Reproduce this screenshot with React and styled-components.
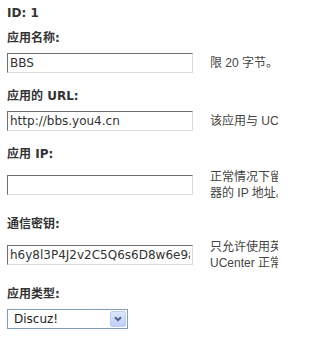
import React from "react";
import styled, { createGlobalStyle } from "styled-components";

const GlobalStyle = createGlobalStyle`
  html, body {
    margin: 0;
    padding: 0;
    background: #fff;
    overflow: hidden;
  }
`;

const Page = styled.div`
  box-sizing: border-box;
  width: 278px;
  overflow: hidden;
  padding: 0 0 0 7px;
  font-family: "Liberation Sans", "Noto Sans CJK SC", sans-serif;
  font-size: 12px;
  color: #333;
`;

const Label = styled.div`
  padding: 6px 0 4px;
  line-height: 15px;
  font-family: "DejaVu Sans", "Noto Sans CJK SC", sans-serif;
  font-size: 12px;
  font-weight: bold;
  color: #333;
  white-space: nowrap;
`;

const Row = styled.div`
  display: flex;
  align-items: center;
  gap: 17px;
  padding: 3px 0 10px;
`;

const TextInput = styled.input`
  flex: none;
  box-sizing: border-box;
  width: 186px;
  height: 20px;
  margin: 0;
  padding: 0 2px;
  border: 1px solid;
  border-color: #6f6f6f #dcdcdc #dcdcdc #6f6f6f;
  font-family: "DejaVu Sans", sans-serif;
  font-size: 12px;
  color: #333;
  background: #fff;
  outline: none;
`;

const Note = styled.div`
  flex: 1;
  min-width: 0;
  overflow: hidden;
  line-height: 16px;
  white-space: nowrap;
  color: #444;
`;

const SelectBox = styled.div`
  box-sizing: border-box;
  display: flex;
  align-items: center;
  width: 121px;
  height: 20px;
  padding: 1px 1px 1px 6px;
  border: 1px solid #7f9db9;
  font-family: "DejaVu Sans", sans-serif;
  font-size: 12px;
  color: #222;
`;

const SelectValue = styled.span`
  flex: 1;
`;

const ArrowButton = styled.span`
  box-sizing: border-box;
  display: flex;
  align-items: center;
  justify-content: center;
  width: 16px;
  height: 16px;
  border: 1px solid #bccdf5;
  border-radius: 2px;
  background: linear-gradient(#dce6fe, #bfd0f8);
`;

function Field({ label, value, children }) {
  return (
    <>
      <Label>{label}</Label>
      <Row>
        <TextInput defaultValue={value} readOnly />
        <Note>{children}</Note>
      </Row>
    </>
  );
}

function App() {
  return (
    <Page>
      <GlobalStyle />
      <Label>ID: 1</Label>
      <Field label="应用名称:" value="BBS">
        限 20 字节。
      </Field>
      <Field label="应用的 URL:" value="http://bbs.you4.cn">
        该应用与 UCenter 通信的接口 URL，结尾请不要加“/”
      </Field>
      <Field label="应用 IP:" value="">
        正常情况下留空即可。如果由于域名解析问题导致 UCenter 与该应用通信失败，请尝试设置为该应用所在服务
        <br />
        器的 IP 地址。
      </Field>
      <Field label="通信密钥:" value="h6y8l3P4J2v2C5Q6s6D8w6e9a1b3F7k2">
        只允许使用英文字母及数字，限 64 字节。应用端的通信密钥必须与此设置保持一致，否则该应用将无法与
        <br />
        UCenter 正常通信。
      </Field>
      <Label>应用类型:</Label>
      <Row>
        <SelectBox>
          <SelectValue>Discuz!</SelectValue>
          <ArrowButton>
            <svg width="8" height="6" viewBox="0 0 8 6">
              <path d="M1 1.2 L4 4.2 L7 1.2" fill="none" stroke="#4d6185" strokeWidth="2" />
            </svg>
          </ArrowButton>
        </SelectBox>
      </Row>
    </Page>
  );
}

export default App;
